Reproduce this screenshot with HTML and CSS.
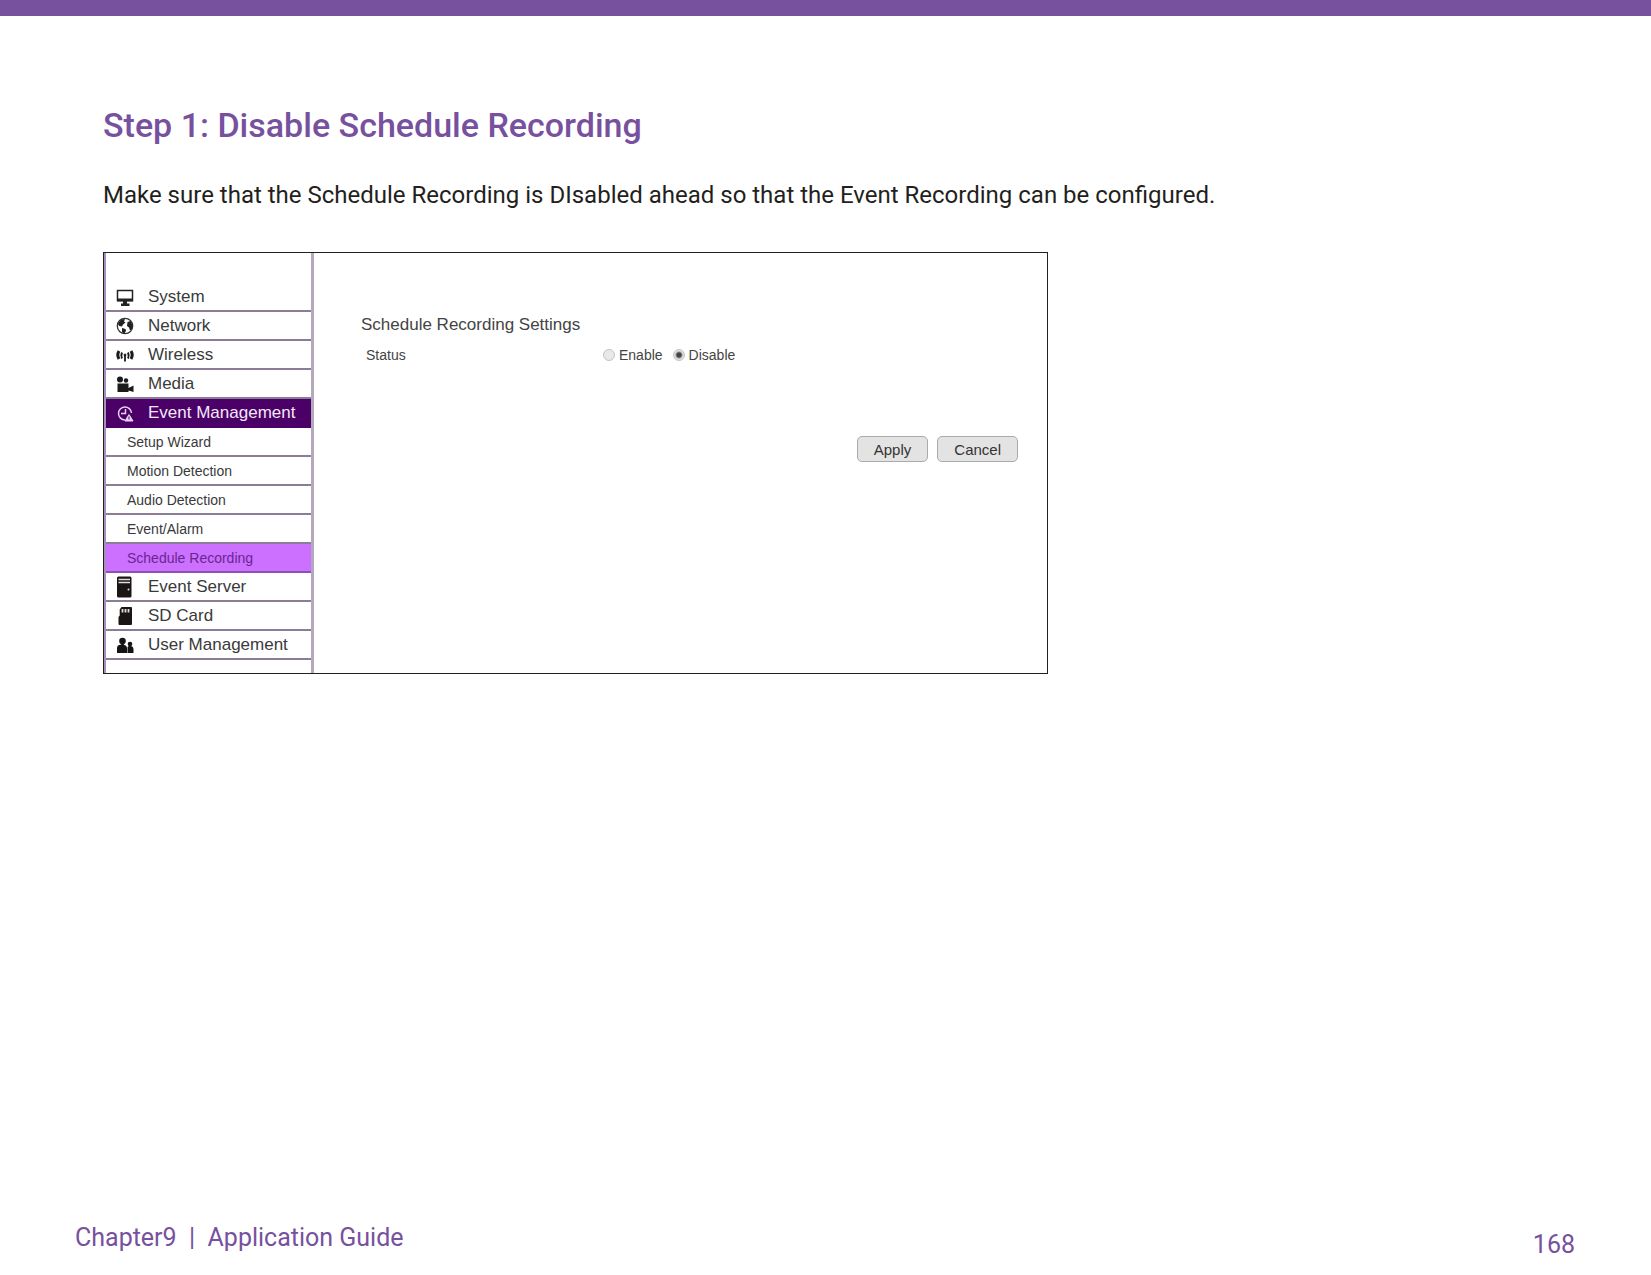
FILE: index.html
```html
<!DOCTYPE html>
<html lang="en">
<head>
<meta charset="utf-8">
<meta name="viewport" content="width=device-width, initial-scale=1">
<title>Step 1: Disable Schedule Recording</title>
<link rel="stylesheet" href="styles.css">
</head>
<body>
<main class="content">
  <h1 class="title">Step 1: Disable Schedule Recording</h1>
  <p class="intro">Make sure that the Schedule Recording is DIsabled ahead so that the Event Recording can be configured.</p>

  <section class="panel">
    <nav class="menu" aria-label="Camera settings">
      <a class="item" href="#system">
        <svg class="icon" viewBox="0 0 18 18"><path d="M1.500 2.500h15v10h-15z" fill="#fff" stroke="#222" stroke-width="1.500"/><path d="M1 10.500h16v3H1zM7 13h4v2.500h2.500V18H5v-2.500h2z" fill="#222"/></svg>
        System</a>
      <a class="item" href="#network">
        <svg class="icon" viewBox="0 0 18 18"><circle cx="9" cy="9" r="7.700" fill="#fff" stroke="#333" stroke-width="1.300"/><path d="M2 6.500 5 2.500 9 2 8 4.500 9.500 5.500 7 7.500 6 9.500 3 9zM11.500 5l3-1 2 4-.5 4-2 1.500-1-3-2-1.500zM6 11l3.500 1 .5 2-2 3-2-2z" fill="#222"/></svg>
        Network</a>
      <a class="item" href="#wireless">
        <svg class="icon" viewBox="0 0 18 18" fill="none" stroke="#1a1a1a"><path d="M3 5q-2.400 4 0 8M15 5q2.400 4 0 8" stroke-width="3"/><path d="M6 6.500q-1.400 3 0 6M12 6.500q1.400 3 0 6" stroke-width="2"/><path d="M9 9.500v6" stroke-width="1.800"/><circle cx="9" cy="9" r="1" fill="#1a1a1a"/></svg>
        Wireless</a>
      <a class="item" href="#media">
        <svg class="icon" viewBox="0 0 18 18" fill="#1a1a1a"><circle cx="4" cy="4.500" r="3"/><circle cx="10" cy="5.500" r="2.200"/><path d="M1.500 8.500H12.500V17H1.500zM12.500 13 17.500 10.500V17L12.500 15.500z"/></svg>
        Media</a>
      <a class="item item-open" href="#event-management">
        <svg class="icon" viewBox="0 0 18 18" fill="none" stroke="#e6d3f2" stroke-width="1.500"><path d="M9 16A6.500 6.500 0 1 1 15.500 9M9.500 5V9.500H5"/><path d="M13 10.500 17 17H9z" fill="#e6d3f2" stroke-width="1"/><path d="M13 12.500v3" stroke="#4b0067" stroke-width="1"/></svg>
        Event Management</a>
      <a class="subitem" href="#setup-wizard">Setup Wizard</a>
      <a class="subitem" href="#motion-detection">Motion Detection</a>
      <a class="subitem" href="#audio-detection">Audio Detection</a>
      <a class="subitem" href="#event-alarm">Event/Alarm</a>
      <a class="subitem subitem-current" href="#schedule-recording" aria-current="page">Schedule Recording</a>
      <a class="item" href="#event-server">
        <svg class="icon icon-tall" viewBox="0 0 18 22"><path d="M1 2q0-1.500 1.500-1.500h11.500q1.500 0 1.500 1.500V20q0 1.500-1.500 1.500H2.500Q1 21.500 1 20z" fill="#1a1414"/><path d="M2.500 3.500h11.500M2.500 6.500h11.500" stroke="#ddd" stroke-width="1.500"/><circle cx="12.500" cy="13.500" r="1" fill="#ddd"/></svg>
        Event Server</a>
      <a class="item" href="#sd-card">
        <svg class="icon" viewBox="0 0 18 18"><path d="M5.500 0H15q1 0 1 1V17q0 1-1 1H3.500q-1 0-1-1V10l1.200-1.500V2.500z" fill="#1a1414"/><path d="M6.500 2v3.500M9.500 2v3.500M12.500 2v3.500" stroke="#ddd" stroke-width="1.800"/></svg>
        SD Card</a>
      <a class="item" href="#user-management">
        <svg class="icon" viewBox="0 0 18 18" fill="#141414"><circle cx="6.500" cy="5" r="3.300"/><path d="M1 17v-5q0-3 3.500-3.200L5.500 8h2l1 1q2.500.5 2.500 3v5z"/><circle cx="14" cy="8" r="2.300"/><path d="M11.500 17v-5.500l1-1.500h2.500q2.500.5 2.500 3v4z"/></svg>
        User Management</a>
    </nav>

    <form class="settings">
      <h2 class="settings-title">Schedule Recording Settings</h2>
      <fieldset class="status">
        <legend class="status-name">Status</legend>
        <div class="choices">
          <input class="radio" type="radio" name="status" id="enable">
          <label for="enable">Enable</label>
          <input class="radio" type="radio" name="status" id="disable" checked>
          <label for="disable">Disable</label>
        </div>
      </fieldset>
      <div class="actions">
        <button class="button" type="button">Apply</button>
        <button class="button" type="button">Cancel</button>
      </div>
    </form>
  </section>
</main>

<footer class="footer">
  <span class="chapter">Chapter9&nbsp; |&nbsp; Application Guide</span>
  <span class="page-number">168</span>
</footer>
</body>
</html>
```
FILE: styles.css
```css
* {
  box-sizing: border-box;
}

body {
  display: flex;
  flex-direction: column;
  min-height: 100vh;
  margin: 0;
  border-top: 16px solid #77519e;
  background: #fff;
  color: #231f20;
  font-family: Roboto, "Open Sans", sans-serif;
}

.content {
  flex: 1;
  padding: 84px 103px 0;
}

.title {
  margin: 0;
  color: #77519e;
  font-size: 34px;
  font-weight: 500;
  line-height: 50px;
}

.intro {
  margin: 26px 0 37px;
  font-size: 24px;
  line-height: 39px;
}

.panel {
  display: flex;
  max-width: 945px;
  border: 1px solid #231f20;
  font-family: "Liberation Sans", Arial, sans-serif;
}

.menu {
  flex: 0 0 210px;
  padding: 30px 0 13px;
  border-left: 2px solid #a78fbb;
  border-right: 3px solid #b3a9bd;
}

.item,
.subitem {
  display: flex;
  align-items: center;
  height: 29px;
  border-bottom: 2px solid #8b7c98;
  color: #3a3a3a;
  text-decoration: none;
}

.item {
  gap: 14px;
  padding-left: 10px;
  font-size: 17px;
}

.subitem {
  padding-left: 21px;
  font-size: 14px;
}

.item-open {
  border-color: #4b0067;
  background: #4b0067;
  color: #f3e8fa;
}

.subitem-current {
  border-color: #8f4fb8;
  background: #cc70ff;
  color: #6a2590;
}

.icon {
  flex: none;
  width: 18px;
  height: 18px;
}

.icon-tall {
  height: 22px;
}

.settings {
  flex: 1;
  padding: 62px 29px 0 47px;
}

.settings-title {
  margin: 0;
  color: #444;
  font-size: 17px;
  font-weight: 400;
  line-height: 20px;
}

.status {
  display: flex;
  align-items: center;
  margin: 10px 0 0;
  padding: 0 0 0 5px;
  border: 0;
  color: #444;
  font-size: 14px;
  line-height: 20px;
}

.status-name {
  float: left;
  width: 237px;
  padding: 0;
}

.choices {
  display: flex;
  align-items: center;
}

.choices label {
  margin: 0 10px 0 4px;
}

.radio {
  appearance: none;
  width: 12px;
  height: 12px;
  margin: 0;
  border: 1px solid #c4c4c4;
  border-radius: 50%;
  background: #e8e8e8;
}

.radio:checked {
  background: radial-gradient(circle, #444 0 2px, #e0e0e0 4px);
}

.actions {
  display: flex;
  justify-content: flex-end;
  gap: 9px;
  margin-top: 71px;
}

.button {
  height: 26px;
  padding: 0 16px;
  border: 1px solid #aaa;
  border-radius: 5px;
  background: #e3e3e3;
  color: #333;
  font-family: inherit;
  font-size: 15px;
}

.footer {
  display: flex;
  align-items: flex-end;
  justify-content: space-between;
  padding: 0 76px 11px 75px;
  color: #77519e;
  font-size: 25px;
  line-height: 38px;
}

.chapter {
  padding-bottom: 7px;
}
```
